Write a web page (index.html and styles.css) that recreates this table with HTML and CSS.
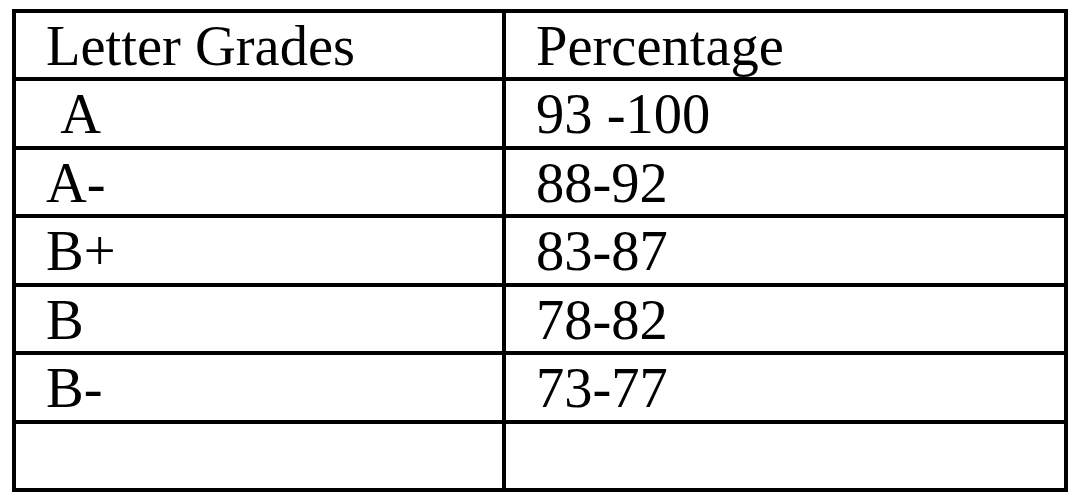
FILE: index.html
```html
<!DOCTYPE html>
<html lang="en">
<head>
  <meta charset="UTF-8" />
  <meta name="viewport" content="width=device-width, initial-scale=1.0"/>
  <title>Letter Grades</title>
  <link rel="stylesheet" href="styles.css">
</head>
<body>

  <table class="notas">
    <colgroup>
      <col class="col-letra">
      <col class="col-porc">
    </colgroup>
    <tr class="fila-a"><td>Letter Grades</td><td>Percentage</td></tr>
    <tr class="fila-b"><td>&nbsp;A</td><td>93 -100</td></tr>
    <tr class="fila-a"><td>A-</td><td>88-92</td></tr>
    <tr class="fila-b"><td>B+</td><td>83-87</td></tr>
    <tr class="fila-a"><td>B</td><td>78-82</td></tr>
    <tr class="fila-b"><td>B-</td><td>73-77</td></tr>
    <tr class="fila-a"><td></td><td></td></tr>
  </table>

</body>
</html>
```

FILE: styles.css
```css
/* --------- Base --------- */
body { margin:0; background:#fff; font-family:"Liberation Serif", "Times New Roman", serif; color:#000 }

/* --------- Tabla de notas --------- */
.notas {
  margin:9px 0 0 12px;
  border-collapse:separate; border-spacing:4px;
  background:#000;
  table-layout:fixed;
  width:1056px;
}
.col-letra { width:486px }
.col-porc { width:558px }
.notas td {
  background:#fff;
  padding:2px 0 0 30px;
  font-size:56.5px; line-height:62px;
  vertical-align:top;
  white-space:nowrap;
}
.fila-a { height:64px }
.fila-b { height:65px }
```
